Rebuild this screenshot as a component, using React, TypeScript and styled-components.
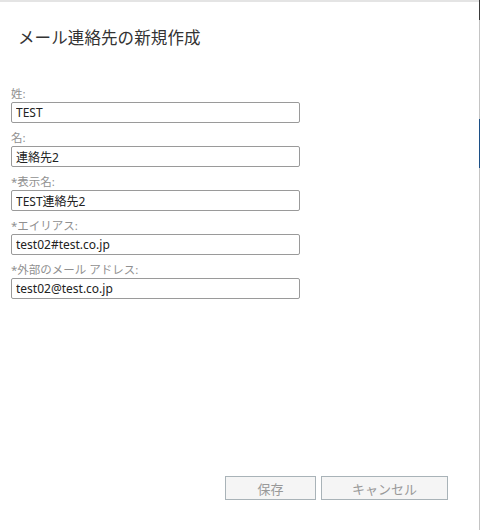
import styled, { createGlobalStyle } from 'styled-components';

const GlobalStyle = createGlobalStyle`
  html, body {
    margin: 0;
    padding: 0;
    background: #ffffff;
  }
  body {
    font-family: 'Segoe UI', 'Noto Sans', 'Noto Sans CJK JP', sans-serif;
  }
`;

type Field = {
  label: string;
  value: string;
};

const fields: Field[] = [
  { label: '姓:', value: 'TEST' },
  { label: '名:', value: '連絡先2' },
  { label: '*表示名:', value: 'TEST連絡先2' },
  { label: '*エイリアス:', value: 'test02#test.co.jp' },
  { label: '*外部のメール アドレス:', value: 'test02@test.co.jp' },
];

export default function App() {
  return (
    <>
      <GlobalStyle />
      <Window>
        <Dialog>
          <Title>メール連絡先の新規作成</Title>
          <Form>
            {fields.map((f) => (
              <FieldRow key={f.label}>
                <Label>{f.label}</Label>
                <Input defaultValue={f.value} />
              </FieldRow>
            ))}
          </Form>
          <Footer>
            <Button $width={91}>保存</Button>
            <Button $width={127}>キャンセル</Button>
          </Footer>
        </Dialog>
        <Edge>
          <EdgeMark $color="#3a3a3a" $height={20} />
          <EdgeMark $color="#c4c4c4" $height={99} />
          <EdgeMark $color="#1c4f86" $height={49} />
          <EdgeMark $color="#c4c4c4" $height={362} />
        </Edge>
      </Window>
    </>
  );
}

const Window = styled.div`
  width: 480px;
  height: 530px;
  display: flex;
  border-top: 2px solid #e4e4e4;
  box-sizing: border-box;
  background: #ffffff;
`;

const Dialog = styled.div`
  flex: 1;
  display: flex;
  flex-direction: column;
  padding: 0 31px 0 11px;
`;

const Title = styled.h1`
  margin: 24px 0 0 7px;
  font-size: 16.5px;
  font-weight: 400;
  color: #333333;
  line-height: 24px;
  letter-spacing: 0.1px;
`;

const Form = styled.div`
  margin-top: 34px;
  display: flex;
  flex-direction: column;
`;

const FieldRow = styled.div`
  display: flex;
  flex-direction: column;
  height: 44px;
`;

const Label = styled.label`
  font-size: 11.5px;
  color: #909090;
  line-height: 19px;
  height: 18px;
`;

const Input = styled.input`
  width: 289px;
  height: 21px;
  box-sizing: border-box;
  border: 1px solid #9a9a9a;
  border-radius: 2px;
  padding: 0 4px;
  font-family: 'Segoe UI', 'Noto Sans', 'Noto Sans CJK JP', sans-serif;
  font-size: 12px;
  color: #222222;
  background: #ffffff;
  outline: none;
`;

const Footer = styled.div`
  margin-top: auto;
  margin-bottom: 30px;
  display: flex;
  justify-content: flex-end;
  gap: 5px;
`;

const Button = styled.button<{ $width: number }>`
  width: ${(p) => p.$width}px;
  height: 24px;
  border: 1px solid #a9b3b8;
  background: #f5f5f5;
  color: #999999;
  font-family: 'Segoe UI', 'Noto Sans', 'Noto Sans CJK JP', sans-serif;
  font-size: 13px;
  padding: 0;
`;

const Edge = styled.div`
  width: 1px;
  display: flex;
  flex-direction: column;
  margin-top: -2px;
`;

const EdgeMark = styled.div<{ $color: string; $height: number }>`
  height: ${(p) => p.$height}px;
  background: ${(p) => p.$color};
  flex-shrink: 0;
`;
